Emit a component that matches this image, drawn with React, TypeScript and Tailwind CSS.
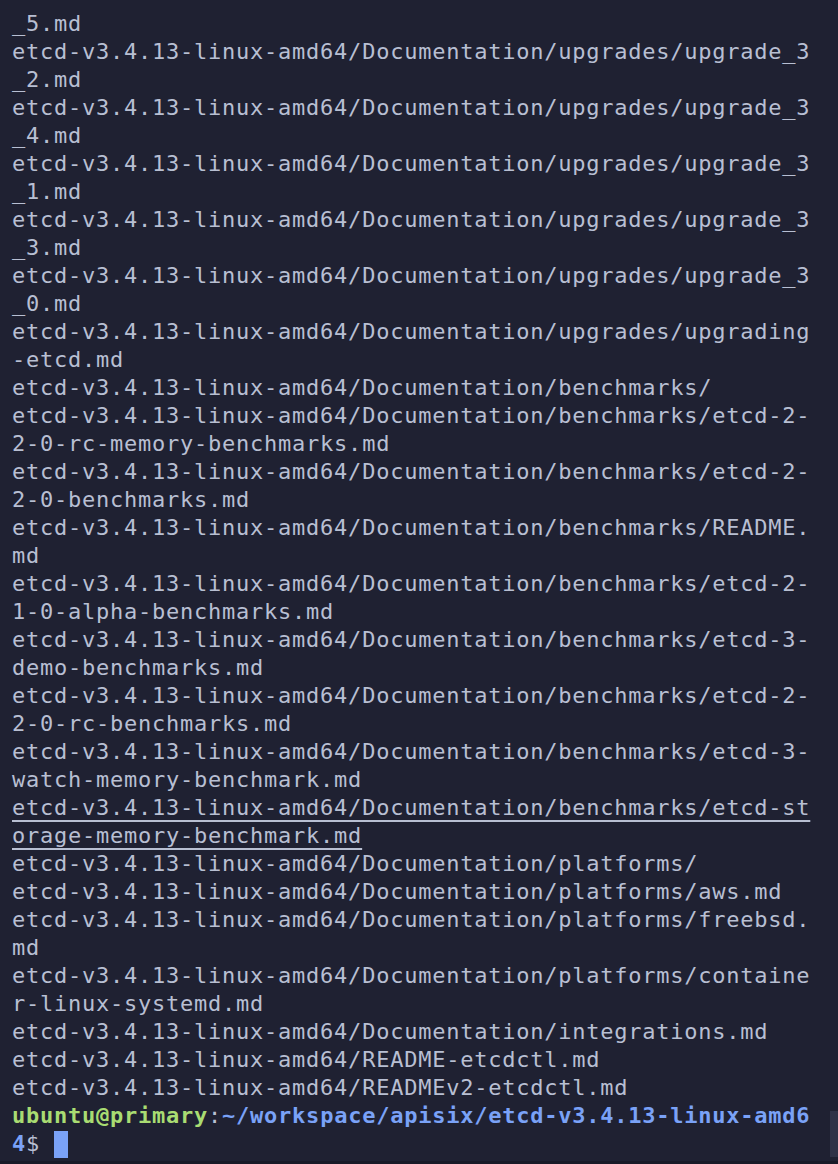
const P = "etcd-v3.4.13-linux-amd64/Documentation/";

const lines: { text: string; underline?: boolean }[] = [
  { text: "_5.md" },
  { text: P + "upgrades/upgrade_3" },
  { text: "_2.md" },
  { text: P + "upgrades/upgrade_3" },
  { text: "_4.md" },
  { text: P + "upgrades/upgrade_3" },
  { text: "_1.md" },
  { text: P + "upgrades/upgrade_3" },
  { text: "_3.md" },
  { text: P + "upgrades/upgrade_3" },
  { text: "_0.md" },
  { text: P + "upgrades/upgrading" },
  { text: "-etcd.md" },
  { text: P + "benchmarks/" },
  { text: P + "benchmarks/etcd-2-" },
  { text: "2-0-rc-memory-benchmarks.md" },
  { text: P + "benchmarks/etcd-2-" },
  { text: "2-0-benchmarks.md" },
  { text: P + "benchmarks/README." },
  { text: "md" },
  { text: P + "benchmarks/etcd-2-" },
  { text: "1-0-alpha-benchmarks.md" },
  { text: P + "benchmarks/etcd-3-" },
  { text: "demo-benchmarks.md" },
  { text: P + "benchmarks/etcd-2-" },
  { text: "2-0-rc-benchmarks.md" },
  { text: P + "benchmarks/etcd-3-" },
  { text: "watch-memory-benchmark.md" },
  { text: P + "benchmarks/etcd-st", underline: true },
  { text: "orage-memory-benchmark.md", underline: true },
  { text: P + "platforms/" },
  { text: P + "platforms/aws.md" },
  { text: P + "platforms/freebsd." },
  { text: "md" },
  { text: P + "platforms/containe" },
  { text: "r-linux-systemd.md" },
  { text: P + "integrations.md" },
  { text: "etcd-v3.4.13-linux-amd64/README-etcdctl.md" },
  { text: "etcd-v3.4.13-linux-amd64/READMEv2-etcdctl.md" },
];

export default function App() {
  return (
    <div className="relative w-[838px] h-[1164px] overflow-hidden bg-[#1f2132] border-b-[3px] border-[#191a28]">
      <div className="pt-[10px] pl-[12px] font-['DejaVu_Sans_Mono',monospace] text-[22px] tracking-[0.76px] text-[#b8bfd2]">
        {lines.map((l, i) => (
          <div key={i} className="h-[28px] leading-[28px] whitespace-pre">
            {l.underline ? (
              <span className="underline decoration-[2px] underline-offset-[5px]">{l.text}</span>
            ) : (
              l.text
            )}
          </div>
        ))}
        <div className="h-[28px] leading-[28px] whitespace-pre font-bold">
          <span className="text-[#a9dc72]">ubuntu@primary</span>
          <span className="font-normal text-[#b8bfd2]">:</span>
          <span className="text-[#7aa2f7]">~/workspace/apisix/etcd-v3.4.13-linux-amd6</span>
        </div>
        <div className="h-[28px] leading-[28px] whitespace-pre flex items-center">
          <span className="font-bold text-[#7aa2f7]">4</span>
          <span>$ </span>
          <span className="inline-block w-[14px] h-[27px] bg-[#7aa2f7]" />
        </div>
      </div>
      <div className="absolute right-0 bottom-[4px] w-[8px] h-[46px] bg-[#2f3247]" />
    </div>
  );
}
